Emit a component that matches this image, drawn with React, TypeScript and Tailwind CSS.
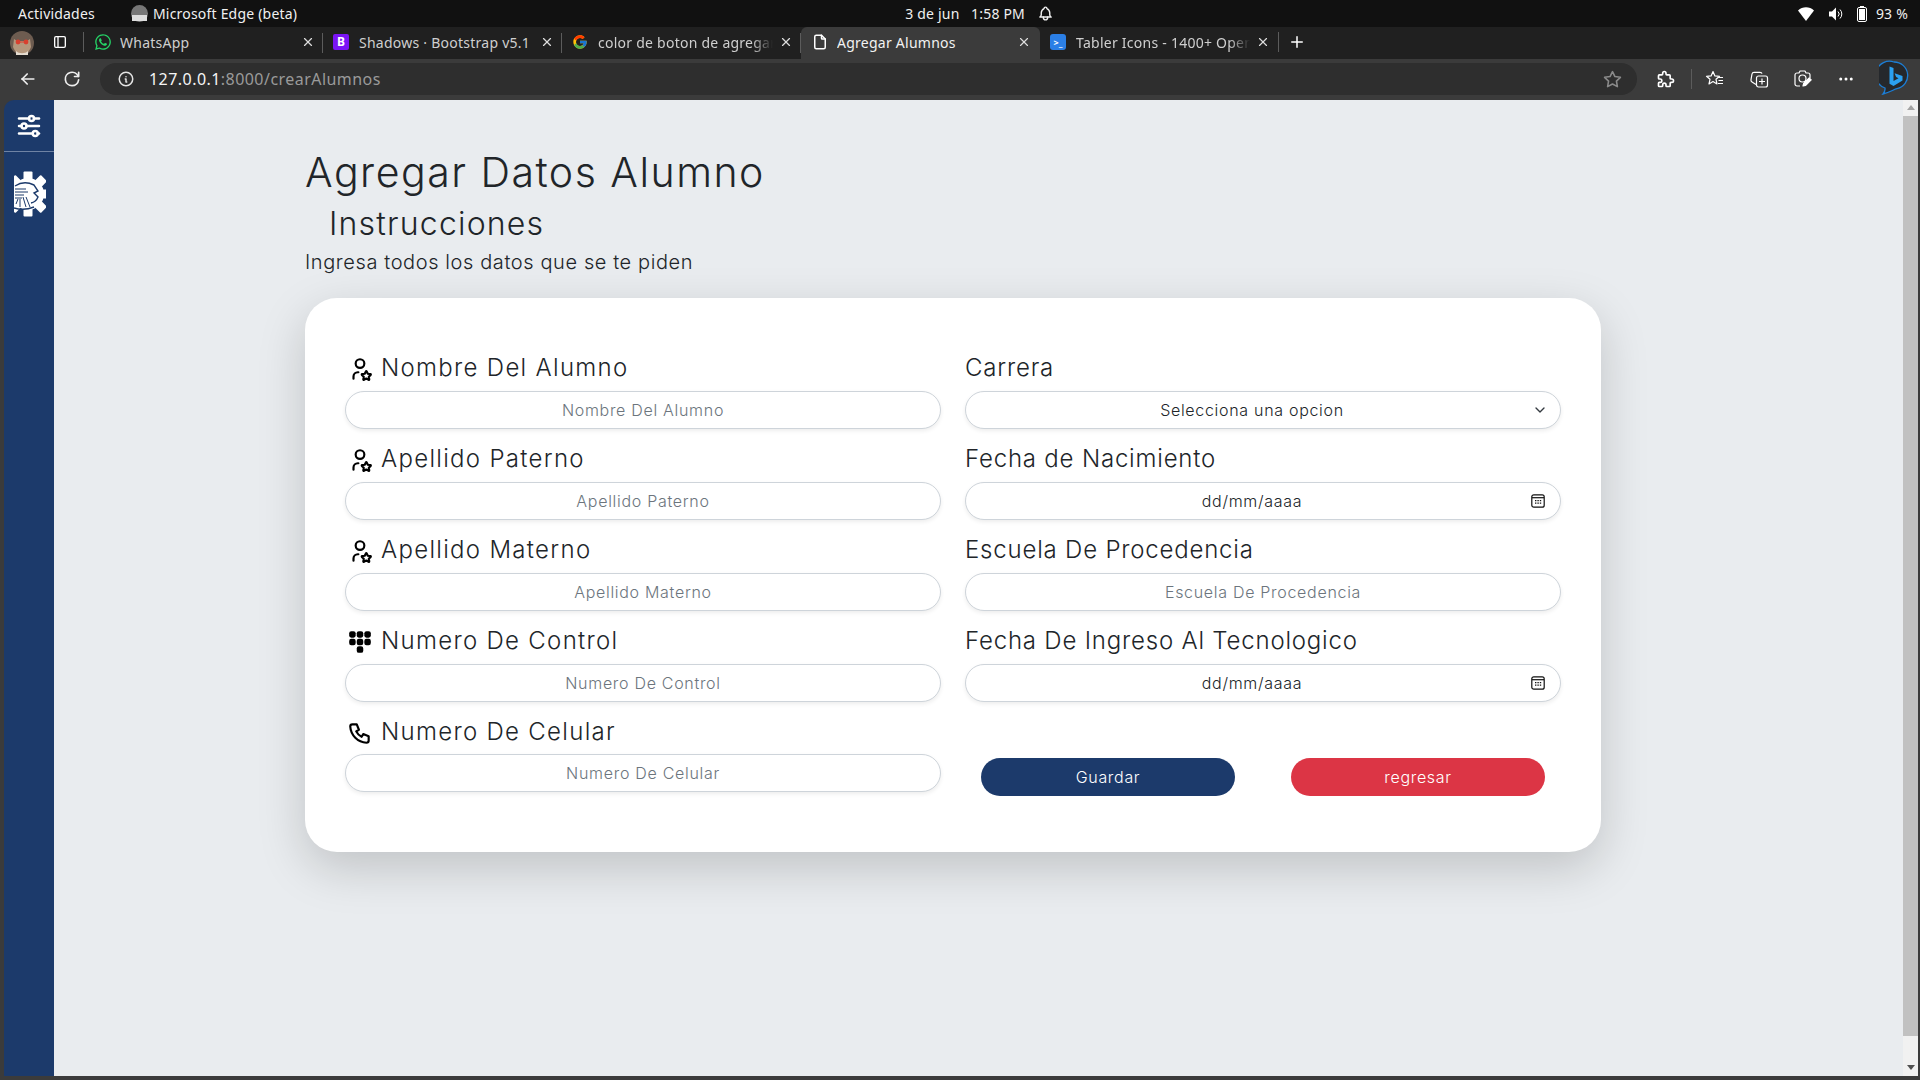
import React from 'react';
import { FaWhatsapp } from 'react-icons/fa';
import { FcGoogle } from 'react-icons/fc';
import {
  TbAdjustmentsHorizontal,
  TbUserStar,
  TbDialpadFilled,
  TbPhone,
  TbChevronDown,
  TbPuzzle,
  TbDots,
  TbPlus,
  TbX,
  TbArrowLeft,
  TbReload,
  TbInfoCircle,
  TbStar,
  TbLayoutSidebar,
  TbFile,
  TbBell,
} from 'react-icons/tb';

const uiFont = "font-['Noto_Sans',sans-serif]";
const formFont = "font-['Inter',sans-serif]";

const GearLogo = () => (
  <svg width="32" height="46" viewBox="0 0 32 46">
    <g fill="#fff">
      <circle cx="14" cy="23" r="16" />
      {[0, 45, 90, 135, 180, 225, 270, 315].map((a) => (
        <rect key={a} x="9.5" y="0.5" width="9" height="8" rx="1" transform={`rotate(${a} 14 23)`} />
      ))}
    </g>
    <rect x="-4" y="0" width="4" height="46" fill="#1c3a6b" />
    <g stroke="#1c3a6b" strokeWidth="1" fill="none">
      <path d="M1 15 Q10 9 20 14 L24 20 L20 22 L24 26 Q22 31 17 32" strokeWidth="1.4" />
      <path d="M1 18h11M1 21h13M1 24h9M1 27h7" />
      <path d="M12 36 L9 26M16 36 L12 26M6 36 L6 28M2 33 L4 28" />
      <path d="M0 37 Q10 40 20 36" strokeWidth="1.4" />
    </g>
  </svg>
);

const CalendarIcon = () => (
  <svg width="14" height="14" viewBox="0 0 14 14" fill="none" stroke="#111" strokeWidth="1.2">
    <rect x="0.8" y="0.8" width="12.4" height="12.4" rx="2" />
    <path d="M1 3.7h12" />
    <path d="M4 6.7h1.4M6.4 6.7h1.4M8.8 6.7h1.4M4 9.2h1.4M6.4 9.2h1.4M8.8 9.2h1.4" strokeWidth="1.3" />
  </svg>
);

const Avatar = () => (
  <svg width="24" height="24" viewBox="0 0 24 24">
    <circle cx="12" cy="12" r="12" fill="#6d5c50" />
    <path d="M4 8l3 2h10l3-2 1 8c-2 5-5 8-9 8s-7-3-9-8z" fill="#b4977c" />
    <circle cx="8" cy="11" r="2.4" fill="#d8402f" />
    <circle cx="16" cy="11" r="2.4" fill="#d8402f" />
    <path d="M10 11h4" stroke="#d8402f" />
    <path d="M6 20c3 3 9 3 12 0v4H6z" fill="#e4dcd0" />
  </svg>
);

const FavoritesIcon = () => (
  <svg width="20" height="20" viewBox="0 0 20 20" fill="none" stroke="#fff" strokeWidth="1.2" strokeLinejoin="round">
    <path d="M8 2.5l1.9 4.4 4.6.4-3.5 3 1 4.6L8 12.6l-4 2.3 1-4.6-3.5-3 4.6-.4z" />
    <path d="M13 8.5h5M13.5 11.5h4.5M13 14.5h5" />
  </svg>
);

const CollectionsIcon = () => (
  <svg width="20" height="20" viewBox="0 0 20 20" fill="none" stroke="#fff" strokeWidth="1.2">
    <path d="M7 15.5L3 13c-1-.6-1.2-1.5-1-2.4L3 5c.2-1 1-1.7 2-1.7h6c1 0 1.8.5 2 1.4" />
    <rect x="7.5" y="7" width="11" height="11" rx="2" />
    <path d="M13 9.5v6M10 12.5h6" />
  </svg>
);

const ScreenshotIcon = () => (
  <svg width="20" height="20" viewBox="0 0 20 20" fill="none" stroke="#fff" strokeWidth="1.2" strokeLinejoin="round">
    <path d="M7 17H4a2 2 0 0 1-2-2V6a2 2 0 0 1 2-2h2l1-2h5l1 2h2a2 2 0 0 1 2 2v3" />
    <circle cx="9.5" cy="9.5" r="3.5" />
    <path d="M10 17l.7-2.7 5.5-5.5 2 2-5.500 5.500z" fill="#fff" />
  </svg>
);

const BingIcon = () => (
  <svg width="30" height="38" viewBox="0 0 30 38" fill="none">
    <path
      d="M15 2a13.5 13.5 0 0 1 3 26.7c-3 .7-8 4-14 5.3 1.600-2 2.300-4 2-6A13.500 13.500 0 0 1 15 2z"
      stroke="#1c7ed6"
      strokeWidth="1.300"
      fill="#25282c"
    />
    <path d="M10.500 6.500l4 1.400v13l5-2.700-2.400-1.200-1.500-3.700 7.900 2.800v4.400l-9 5.500-4-2.300z" fill="#2ba0f0" />
  </svg>
);

const WifiIcon = () => (
  <svg width="16" height="14" viewBox="0 0 16 14">
    <path d="M0 3.500C4.500-.7 11.500-.7 16 3.500L8 14z" fill="#fff" />
  </svg>
);

const SpeakerIcon = () => (
  <svg width="16" height="16" viewBox="0 0 16 16" fill="none">
    <path d="M1 5.500h3L8 1.500v13l-4-4H1z" fill="#fff" />
    <path d="M10 5.500a3.500 3.500 0 0 1 0 5M12 3.500a6.500 6.500 0 0 1 0 9" stroke="#fff" strokeWidth="1" />
  </svg>
);

const BatteryIcon = () => (
  <svg width="10" height="16" viewBox="0 0 10 16" fill="none">
    <rect x="0.500" y="1.500" width="9" height="14" rx="1.500" stroke="#fff" />
    <rect x="3" y="0" width="4" height="1.500" fill="#fff" />
    <rect x="2" y="3" width="6" height="11" fill="#fff" />
  </svg>
);

interface BrowserTab {
  title: string;
  icon: React.ReactNode;
  active?: boolean;
  fade?: boolean;
}

const tabs: BrowserTab[] = [
  { title: 'WhatsApp', icon: <FaWhatsapp className="h-[18px] w-[18px] text-[#25d366]" /> },
  {
    title: 'Shadows · Bootstrap v5.1',
    icon: (
      <span className="flex h-4 w-4 items-center justify-center rounded-[2px] bg-[#7a14f5] text-[12px] leading-none font-bold text-white">
        B
      </span>
    ),
  },
  { title: 'color de boton de agregar', icon: <FcGoogle className="h-4 w-4" />, fade: true },
  { title: 'Agregar Alumnos', icon: <TbFile className="h-[18px] w-[18px] text-white" />, active: true },
  {
    title: 'Tabler Icons - 1400+ Open',
    icon: (
      <span className="flex h-4 w-4 items-center justify-center rounded-[3px] bg-[#2b7fe6] text-[9px] leading-none font-bold text-white">
        {'>_'}
      </span>
    ),
    fade: true,
  },
];

const Tab = ({ tab, last }: { tab: BrowserTab; last: boolean }) => (
  <div
    className={`flex h-[36px] w-[239px] shrink-0 items-start ${
      tab.active ? 'rounded-t-[6px] bg-[#3b3b3b]' : ''
    }`}
  >
    <div className="flex h-[30px] w-full items-center pr-[9px] pl-[10px]">
      <span className="flex w-[26px] shrink-0 items-center">{tab.icon}</span>
      <span
        className={`min-w-0 flex-1 overflow-hidden text-[14px] tracking-[0.25px] whitespace-nowrap ${
          tab.active ? 'text-[#f2f2f2]' : 'text-[#cfcfcf]'
        } ${tab.fade ? '[mask-image:linear-gradient(to_right,black_88%,transparent)]' : ''}`}
      >
        {tab.title}
      </span>
      <TbX className="ml-[6px] h-[14px] w-[14px] shrink-0 text-[#dddddd]" />
      {!tab.active && !last && <span className="mt-[2px] -mr-[9px] ml-[7px] h-[20px] w-px bg-[#5c5c5c]" />}
    </div>
  </div>
);

const TopBar = () => (
  <div className={`flex h-[27px] items-center bg-[#111111] text-[14px] tracking-[0.2px] text-[#f0f0f0] ${uiFont}`}>
    <span className="ml-[18px]">Actividades</span>
    <span className="ml-[36px] flex items-center gap-[5px]">
      <span className="flex h-[17px] w-[17px] items-end justify-center rounded-full bg-[#777777]">
        <span className="mb-[1px] h-[6px] w-[15px] bg-[#dddddd]" />
      </span>
      Microsoft Edge (beta)
    </span>
    <span className="ml-[608px] w-[118px] whitespace-nowrap">3 de jun&nbsp;&nbsp; 1:58 PM</span>
    <TbBell className="ml-[14px] h-[17px] w-[17px]" />
    <span className="ml-auto flex items-center">
      <WifiIcon />
      <span className="ml-[14px]"><SpeakerIcon /></span>
      <span className="ml-[13px]"><BatteryIcon /></span>
      <span className="mr-[12px] ml-[9px]">93 %</span>
    </span>
  </div>
);

const TabStrip = () => (
  <div className={`flex h-[32px] items-start bg-[#202020] ${uiFont}`}>
    <div className="ml-[10px] flex h-[32px] w-[24px] items-center">
      <Avatar />
    </div>
    <TbLayoutSidebar className="mt-[7px] ml-[18px] h-[16px] w-[16px] text-white" />
    <span className="mt-[5px] ml-[15px] h-[20px] w-px bg-[#5c5c5c]" />
    <div className="flex">
      {tabs.map((tab, i) => (
        <Tab key={tab.title} tab={tab} last={i === tabs.length - 1} />
      ))}
    </div>
    <span className="mt-[5px] -ml-px h-[20px] w-px bg-[#5c5c5c]" />
    <TbPlus className="mt-[6px] ml-[9px] h-[18px] w-[18px] text-white" />
  </div>
);

const ToolBar = () => (
  <div className={`flex h-[41px] items-center bg-[#3b3b3b] pb-[1px] ${uiFont}`}>
    <TbArrowLeft className="ml-[18px] h-[20px] w-[20px] text-[#eeeeee]" />
    <TbReload className="ml-[24px] h-[20px] w-[20px] text-[#eeeeee]" />
    <div className="ml-[18px] flex h-[32px] w-[1537px] items-center rounded-full bg-[#2e2e2e]">
      <TbInfoCircle className="ml-[17px] h-[18px] w-[18px] text-[#e5e5e5]" />
      <span className="ml-[14px] text-[16px] tracking-[0.45px] text-[#f5f5f5]">
        127.0.0.1<span className="text-[#9a9a9a]">:8000/crearAlumnos</span>
      </span>
      <TbStar className="mr-[15px] ml-auto h-[19px] w-[19px] text-[#8a8a8a]" />
    </div>
    <TbPuzzle className="ml-[19px] h-[20px] w-[20px] text-white" />
    <span className="ml-[15px] h-[20px] w-px bg-[#5c5c5c]" />
    <span className="ml-[13px]"><FavoritesIcon /></span>
    <span className="ml-[24px]"><CollectionsIcon /></span>
    <span className="ml-[24px]"><ScreenshotIcon /></span>
    <TbDots className="ml-[24px] h-[18px] w-[18px] text-white" />
    <span className="ml-[24px]"><BingIcon /></span>
  </div>
);

const Sidebar = () => (
  <aside className="flex w-[50px] shrink-0 flex-col rounded-tl-[10px] bg-[#1c3a6b]">
    <div className="flex h-[52px] items-center justify-center border-b border-[#6f83a4]">
      <TbAdjustmentsHorizontal className="h-[30px] w-[30px] text-white" />
    </div>
    <div className="mt-[19px] ml-[10px]">
      <GearLogo />
    </div>
  </aside>
);

const fieldLabel = `mb-[3px] flex h-[40px] items-center text-[24px] leading-none font-light text-[#212529] ${formFont}`;
const fieldBox =
  'flex h-[38px] w-full items-center rounded-full border border-[#ced4da] bg-white pb-[1px] text-center text-[16px] tracking-[0.7px] shadow-[0_2px_4px_rgba(0,0,0,0.075)]';

const Field = ({
  label,
  icon,
  placeholder,
  inputClass = '',
}: {
  label: string;
  icon?: React.ReactNode;
  placeholder: string;
  inputClass?: string;
}) => (
  <div className="h-[91px] pt-[10px]">
    <label className={fieldLabel}>
      {icon && <span className="mr-[8px] flex w-[28px] justify-center pt-[2px] pl-[1px]">{icon}</span>}
      {label}
    </label>
    <input
      readOnly
      placeholder={placeholder}
      className={`${fieldBox} font-light outline-none placeholder:text-[#6c757d] ${formFont} ${inputClass}`}
    />
  </div>
);

const DateField = ({ label }: { label: string }) => (
  <div className="h-[91px] pt-[10px]">
    <div className={fieldLabel}>{label}</div>
    <div className={`${fieldBox} font-light text-[#212529] ${formFont}`}>
      <span className="flex-1 pl-[7px]">dd/mm/aaaa</span>
      <span className="mr-[15px]"><CalendarIcon /></span>
    </div>
  </div>
);

const userIcon = <TbUserStar className="h-[26px] w-[26px] text-black" />;

const AlumnoForm = () => (
  <div className="h-[554px] w-[1296px] rounded-[32px] bg-white px-[40px] pt-[40px] shadow-[0_16px_48px_rgba(0,0,0,0.175)]">
    <div className="grid grid-cols-2 gap-x-[24px]">
      <div className="tracking-[1.3px]">
        <Field label="Nombre Del Alumno" icon={userIcon} placeholder="Nombre Del Alumno" />
        <Field label="Apellido Paterno" icon={userIcon} placeholder="Apellido Paterno" />
        <Field label="Apellido Materno" icon={userIcon} placeholder="Apellido Materno" />
        <Field
          label="Numero De Control"
          icon={<TbDialpadFilled className="h-[26px] w-[26px] text-black" />}
          placeholder="Numero De Control"
        />
        <Field
          label="Numero De Celular"
          icon={<TbPhone className="h-[26px] w-[26px] text-black" />}
          placeholder="Numero De Celular"
          inputClass="-mt-px"
        />
      </div>
      <div className="tracking-[0.8px]">
        <div className="h-[91px] pt-[10px]">
          <div className={fieldLabel}>Carrera</div>
          <div className={`${fieldBox} font-light text-[#212529] ${formFont}`}>
            <span className="flex-1 pl-[6px]">Selecciona una opcion</span>
            <TbChevronDown className="mr-[12px] h-[16px] w-[16px] text-[#343a40]" />
          </div>
        </div>
        <DateField label="Fecha de Nacimiento" />
        <Field label="Escuela De Procedencia" placeholder="Escuela De Procedencia" />
        <DateField label="Fecha De Ingreso Al Tecnologico" />
        <div className={`flex justify-between px-[16px] pt-[56px] text-[16px] font-light tracking-[0.7px] text-white ${formFont}`}>
          <button className="h-[38px] w-[254px] rounded-full bg-[#1c3a6b] pb-[1px]">Guardar</button>
          <button className="h-[38px] w-[254px] rounded-full bg-[#dc3545] pb-[1px]">regresar</button>
        </div>
      </div>
    </div>
  </div>
);

const Scrollbar = () => (
  <div className="flex w-[15px] shrink-0 flex-col items-center bg-[#f1f1f1] pt-[5px] text-[#505050]">
    <span className="h-0 w-0 border-x-[4px] border-b-[5px] border-x-transparent border-b-[#a3a3a3]" />
    <span className="mt-[6px] h-[920px] w-full bg-[#c1c1c1]" />
    <span className="mt-auto mb-[6px] h-0 w-0 border-x-[4px] border-t-[5px] border-x-transparent border-t-[#505050]" />
  </div>
);

export default function App() {
  return (
    <div className="flex h-screen w-full flex-col overflow-hidden bg-[#3b3b3b]">
      <TopBar />
      <TabStrip />
      <ToolBar />
      <div className="flex min-h-0 flex-1 pr-[2px] pb-[4px] pl-[4px]">
        <Sidebar />
        <main className="min-w-0 flex-1 bg-[#e9ecef] pt-[48px] pl-[251px]">
          <h1 className={`text-[41px] leading-[48px] font-light tracking-[1.5px] text-[#212529] ${formFont}`}>
            Agregar Datos Alumno
          </h1>
          <h2 className={`mt-[9px] pl-[24px] text-[32px] leading-[38px] font-light tracking-[1.2px] text-[#212529] ${formFont}`}>
            Instrucciones
          </h2>
          <p className={`mt-[4px] mb-[21px] text-[20px] leading-[30px] font-light tracking-[0.6px] text-[#212529] ${formFont}`}>
            Ingresa todos los datos que se te piden
          </p>
          <AlumnoForm />
        </main>
        <Scrollbar />
      </div>
    </div>
  );
}
